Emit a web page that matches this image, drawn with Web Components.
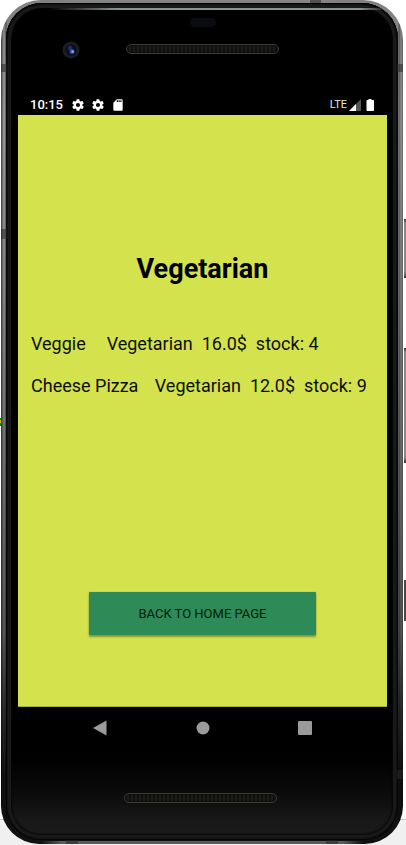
<!DOCTYPE html>
<html lang="en">
<head>
<meta charset="utf-8">
<meta name="viewport" content="width=device-width, initial-scale=1">
<title>Vegetarian</title>
<style>
  html, body { margin: 0; }
  body {
    display: flex;
    min-height: 100vh;
    font-family: Roboto, "Liberation Sans", sans-serif;
    background: linear-gradient(to top, #f0f0f0 25px, #c4c4c4 25px 26px, #fff 26px);
  }
</style>
</head>
<body>
<phone-frame>
  <status-bar slot="status" time="10:15" network="LTE"></status-bar>
  <category-screen heading="Vegetarian">
    <product-row name="Veggie " kind="Vegetarian" price="16.0$" stock="4"></product-row>
    <product-row name="Cheese Pizza" kind="Vegetarian" price="12.0$" stock="9"></product-row>
    <action-button slot="action">BACK TO HOME PAGE</action-button>
  </category-screen>
  <nav-bar slot="nav"></nav-bar>
</phone-frame>

<script>
  class Base extends HTMLElement {
    render(html) {
      this.attachShadow({ mode: "open" }).innerHTML = html;
    }
  }

  class SpeakerGrille extends Base {
    connectedCallback() {
      this.render(`
        <style>
          :host {
            display: block; width: 41%; height: 8px; border: 1px solid #3b3a37; border-radius: 5px;
            background: repeating-linear-gradient(90deg, #12110e 0 2px, #1e1c18 2px 4px);
            box-shadow: inset 0 0 2px #000;
          }
        </style>`);
    }
  }

  class FrontCamera extends Base {
    connectedCallback() {
      this.render(`
        <style>:host { display: block; width: 18px; height: 18px; } svg { display: block; }</style>
        <svg width="18" height="18" viewBox="0 0 18 18" aria-hidden="true">
          <circle cx="9" cy="9" r="8.5" fill="#1d1d1f"/>
          <circle cx="9" cy="9" r="5.5" fill="#0c0e1c"/>
          <circle cx="8" cy="7" r="2.3" fill="#1c2a72"/>
          <circle cx="10" cy="10.5" r="2.6" fill="#3047ad"/>
          <circle cx="10.6" cy="10.6" r="1.2" fill="#a8b8ff"/>
        </svg>`);
    }
  }

  class PhoneFrame extends Base {
    connectedCallback() {
      this.render(`
        <style>
          :host { display: flex; flex: 1; position: relative; padding: 0 3px 1px 1px; }
          .rail {
            flex: 1; display: flex; padding: 3px 5px 4px; border-radius: 40px 40px 38px 38px;
            background:
              linear-gradient(90deg, transparent 50px, #858585 90px calc(100% - 90px), transparent calc(100% - 50px)) top / 100% 2px no-repeat,
              linear-gradient(90deg, transparent 40px, #5b595b 60px calc(100% - 60px), transparent calc(100% - 40px)) bottom / 100% 3px no-repeat,
              linear-gradient(90deg, rgba(0,0,0,.45) 0 1px, transparent 2px 4px, rgba(0,0,0,.5) 5px, transparent 6px calc(100% - 5px), rgba(0,0,0,.4) calc(100% - 4px), transparent calc(100% - 2px), rgba(0,0,0,.3)),
              linear-gradient(#808080, #929292 15%, #707172 50%, #555 75%, #2b2c2c 84%, #111 92%);
          }
          .body {
            flex: 1; display: flex; flex-direction: column; min-width: 0;
            padding: 0 11px 0 12px; border-radius: 36px 36px 34px 34px;
            background: linear-gradient(to top, #1c1c1c, #181818 20px, #0a0a0a 50px, #000 84px);
            box-shadow: inset 0 0 0 1px #050505, inset 0 0 0 2px #111, inset 0 0 0 5px #191919, inset 0 0 2px 6px #060606;
          }
          .top { height: 91px; display: flex; justify-content: center; position: relative; }
          .gleam {
            position: absolute; left: 32px; right: 0; top: 5px; height: 2px;
            border-radius: 2px;
            background: linear-gradient(90deg, transparent, #8b9494 20%, #8b9494 92%, transparent);
          }
          .sensor { position: absolute; top: 15px; width: 26px; height: 9px; border-radius: 5px; background: #0b0c12; }
          front-camera { position: absolute; left: 44px; top: 38px; }
          .top speaker-grille { margin-top: 41px; }
          main { flex: 1; display: flex; flex-direction: column; }
          .chin { height: 91px; display: flex; justify-content: center; }
          .chin speaker-grille { margin: 44px 4px 0 0; }
          .key, .band { position: absolute; }
          .key { right: 0; width: 2px; background: linear-gradient(#333, #888 4px calc(100% - 6px), #333); }
          .lock { top: 219px; height: 59px; }
          .volume { top: 348px; height: 115px; }
          .lower { top: 580px; height: 41px; background: #484848; }
          .band { background: rgba(40,40,40,.55); }
          .b1 { left: 1px; top: 64px; width: 6px; height: 8px; }
          .b2 { right: 3px; top: 64px; width: 6px; height: 8px; }
          .b3 { left: 1px; top: 229px; width: 6px; height: 10px; }
          .b4 { right: 3px; top: 770px; width: 6px; height: 9px; }
          .b5 { right: 85px; top: 0; width: 11px; height: 3px; }
          .b6 { left: 66px; bottom: 1px; width: 12px; height: 4px; }
          .b7 { right: 68px; bottom: 1px; width: 12px; height: 4px; }
          .mark { position: absolute; left: 0; top: 418px; width: 1px; height: 8px; background: linear-gradient(#008c20 2px, #d8b400 2px 5px, #008c20 5px); }
        </style>
        <div class="rail"><div class="body">
          <div class="top">
            <i class="gleam"></i><i class="sensor"></i>
            <front-camera></front-camera><speaker-grille></speaker-grille>
          </div>
          <slot name="status"></slot>
          <main><slot></slot></main>
          <slot name="nav"></slot>
          <div class="chin"><speaker-grille></speaker-grille></div>
        </div></div>
        <i class="key lock"></i><i class="key volume"></i><i class="key lower"></i>
        <i class="band b1"></i><i class="band b2"></i><i class="band b3"></i><i class="band b4"></i>
        <i class="band b5"></i><i class="band b6"></i><i class="band b7"></i><i class="mark"></i>`);
    }
  }

  const gear = `<svg width="14" height="14" viewBox="0 0 24 24" fill="#fff" aria-hidden="true"><path d="M19.43 12.98c.04-.32.07-.64.07-.98s-.03-.66-.07-.98l2.11-1.65c.19-.15.24-.42.12-.64l-2-3.46c-.12-.22-.39-.3-.61-.22l-2.49 1c-.52-.4-1.08-.73-1.69-.98l-.38-2.65A.49.49 0 0 0 14 2h-4c-.25 0-.46.18-.49.42l-.38 2.65c-.61.25-1.17.59-1.69.98l-2.49-1c-.23-.09-.49 0-.61.22l-2 3.46c-.13.22-.07.49.12.64l2.11 1.65c-.04.32-.07.65-.07.98s.03.66.07.98l-2.11 1.65c-.19.15-.24.42-.12.64l2 3.46c.12.22.39.3.61.22l2.49-1c.52.4 1.08.73 1.69.98l.38 2.65c.03.24.24.42.49.42h4c.25 0 .46-.18.49-.42l.38-2.65c.61-.25 1.17-.59 1.69-.98l2.49 1c.23.09.49 0 .61-.22l2-3.46c.12-.22.07-.49-.12-.64l-2.11-1.65zM12 15.5a3.500 3.500 0 1 1 0-7 3.500 3.500 0 0 1 0 7z"/></svg>`;

  class StatusBar extends Base {
    connectedCallback() {
      this.render(`
        <style>
          :host { display: flex; justify-content: space-between; align-items: center; height: 21px; padding: 0 12px; color: #fff; }
          div { display: flex; align-items: center; }
          .time { font-size: 13px; font-weight: 500; margin-right: 8px; }
          .left svg { margin-right: 6px; }
          .net { font-size: 11px; color: #e4e4e4; margin-right: 2px; }
          .right svg + svg { margin-left: 4px; }
          svg { display: block; }
        </style>
        <div class="left">
          <span class="time">${this.getAttribute("time")}</span>${gear}${gear}
          <svg width="14" height="14" viewBox="0 0 24 24" aria-hidden="true"><path fill="#fff" fill-rule="evenodd" d="M18 2h-8L4 8v12c0 1.100.9 2 2 2h12c1.100 0 2-.9 2-2V4c0-1.100-.9-2-2-2zm-6 5h-2V4h2v3zm3 0h-2V4h2v3zm3 0h-2V4h2v3z"/></svg>
        </div>
        <div class="right">
          <span class="net">${this.getAttribute("network")}</span>
          <svg width="12" height="12" viewBox="0 0 12 12" aria-hidden="true"><path fill="#555" d="M12 0v12H0z"/><path fill="#fff" d="M7 5v7H0z"/></svg>
          <svg width="10" height="14" viewBox="0 0 10 14" aria-hidden="true"><path fill="#fff" d="M3.500 1h3v1H8c.6 0 1 .4 1 1v9c0 .6-.4 1-1 1H2.500c-.6 0-1-.4-1-1V3c0-.6.4-1 1-1h1z"/></svg>
        </div>`);
    }
  }

  class CategoryScreen extends Base {
    connectedCallback() {
      this.render(`
        <style>
          :host {
            flex: 1; display: flex; flex-direction: column; color: #0c1004; background: #d4e24e;
            padding: 138px 13px 71px; border-bottom: 1px solid #a4ae3c; box-sizing: border-box;
          }
          h1 { margin: 0; font-size: 27px; line-height: 32px; font-weight: 700; text-align: center; color: #000; }
          .list { margin-top: 38px; flex: 1; }
        </style>
        <h1>${this.getAttribute("heading")}</h1>
        <div class="list" role="list"><slot></slot></div>
        <slot name="action"></slot>`);
    }
  }

  class ProductRow extends Base {
    connectedCallback() {
      this.setAttribute("role", "listitem");
      const a = n => this.getAttribute(n);
      this.render(`<style>:host { display: flex; gap: 3px; font-size: 18px; line-height: 42px; white-space: pre; }</style><span>${a("name")}   </span><span>${a("kind")}  ${a("price")}  stock: ${a("stock")}</span>`);
    }
  }

  class ActionButton extends Base {
    connectedCallback() {
      this.render(`
        <style>
          :host { display: flex; justify-content: center; }
          button {
            width: 66%; height: 43px; border: 0; border-radius: 1px; padding: 0; cursor: pointer;
            background: #2e8b57; color: #041a0b; font: 400 13px/16px Roboto, sans-serif;
            box-shadow: 0 2px 2px rgba(70,75,20,.5), 0 0 1px rgba(70,75,20,.5);
          }
        </style>
        <button type="button"><slot></slot></button>`);
    }
  }

  class NavBar extends Base {
    connectedCallback() {
      this.render(`
        <style>
          :host { display: flex; justify-content: space-between; height: 42px; padding: 0 19%; }
          button { border: 0; padding: 0; background: none; width: 24px; display: grid; place-items: center; cursor: pointer; }
          svg { display: block; fill: #9a9a9a; }
        </style>
        <button type="button" aria-label="Back"><svg width="16" height="16" viewBox="0 0 16 16"><path d="M14.500.5v15L1 8z"/></svg></button>
        <button type="button" aria-label="Home"><svg width="16" height="16" viewBox="0 0 16 16"><circle cx="8" cy="8" r="6.500"/></svg></button>
        <button type="button" aria-label="Recent apps"><svg width="16" height="16" viewBox="0 0 16 16"><rect x="1" y="1" width="14" height="14" rx="1"/></svg></button>`);
    }
  }

  customElements.define("speaker-grille", SpeakerGrille);
  customElements.define("front-camera", FrontCamera);
  customElements.define("status-bar", StatusBar);
  customElements.define("product-row", ProductRow);
  customElements.define("action-button", ActionButton);
  customElements.define("category-screen", CategoryScreen);
  customElements.define("nav-bar", NavBar);
  customElements.define("phone-frame", PhoneFrame);
</script>
</body>
</html>
